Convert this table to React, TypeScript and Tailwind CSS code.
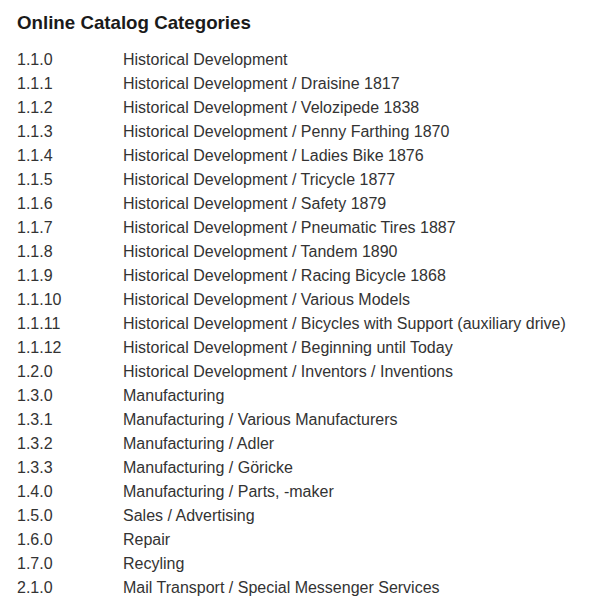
import React from "react";

const rows: [string, string][] = [
  ["1.1.0", "Historical Development"],
  ["1.1.1", "Historical Development / Draisine 1817"],
  ["1.1.2", "Historical Development / Velozipede 1838"],
  ["1.1.3", "Historical Development / Penny Farthing 1870"],
  ["1.1.4", "Historical Development / Ladies Bike 1876"],
  ["1.1.5", "Historical Development / Tricycle 1877"],
  ["1.1.6", "Historical Development / Safety 1879"],
  ["1.1.7", "Historical Development / Pneumatic Tires 1887"],
  ["1.1.8", "Historical Development / Tandem 1890"],
  ["1.1.9", "Historical Development / Racing Bicycle 1868"],
  ["1.1.10", "Historical Development / Various Models"],
  ["1.1.11", "Historical Development / Bicycles with Support (auxiliary drive)"],
  ["1.1.12", "Historical Development / Beginning until Today"],
  ["1.2.0", "Historical Development / Inventors / Inventions"],
  ["1.3.0", "Manufacturing"],
  ["1.3.1", "Manufacturing / Various Manufacturers"],
  ["1.3.2", "Manufacturing / Adler"],
  ["1.3.3", "Manufacturing / Göricke"],
  ["1.4.0", "Manufacturing / Parts, -maker"],
  ["1.5.0", "Sales / Advertising"],
  ["1.6.0", "Repair"],
  ["1.7.0", "Recyling"],
  ["2.1.0", "Mail Transport / Special Messenger Services"],
];

export default function App() {
  return (
    <div className="bg-white w-[597px] h-[602px] overflow-hidden px-[17px] pt-[12px] font-['Liberation_Sans',Arial,sans-serif]">
      <h1 className="text-[18.72px] leading-[22px] font-bold text-[#1a1a1a] mb-[14px]">
        Online Catalog Categories
      </h1>
      <div className="grid grid-cols-[106px_1fr] text-[16px] leading-[24px] text-[#333]">
        {rows.map(([n, l]) => (
          <React.Fragment key={n}>
            <div>{n}</div>
            <div className="whitespace-nowrap">{l}</div>
          </React.Fragment>
        ))}
      </div>
    </div>
  );
}
